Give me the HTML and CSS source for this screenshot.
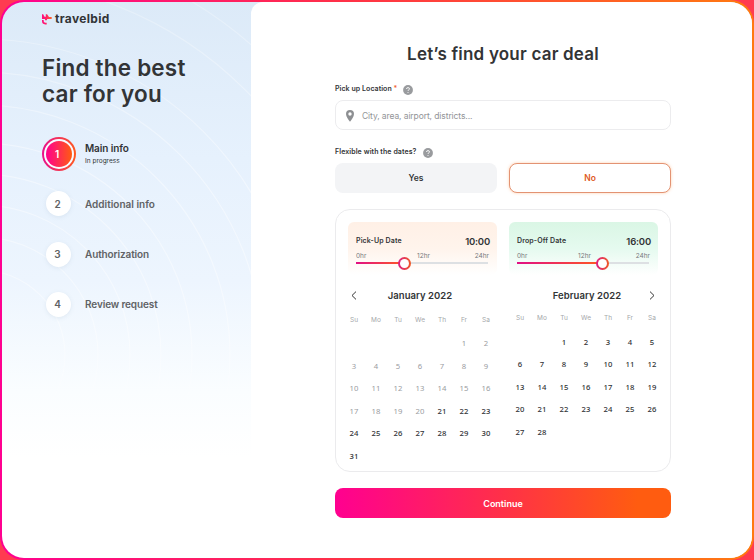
FILE: index.html
```html
<!DOCTYPE html>
<html lang="en">
<head>
<meta charset="utf-8">
<title>travelbid</title>
<link rel="stylesheet" href="styles.css">
</head>
<body>
<div class="frame">
<div class="app">
  <aside class="sidebar">
    <svg class="arcs" viewBox="2 2 250 558" width="250" height="558" aria-hidden="true">
      <g fill="none" stroke="#fff" stroke-opacity=".4" stroke-width="1.200">
        <circle cx="-20" cy="355" r="412"/><circle cx="-20" cy="355" r="375"/><circle cx="-20" cy="355" r="316"/><circle cx="-20" cy="355" r="283"/><circle cx="-20" cy="355" r="250"/><circle cx="-20" cy="355" r="212"/><circle cx="-20" cy="355" r="181"/><circle cx="-20" cy="355" r="150"/><circle cx="-20" cy="355" r="118"/><circle cx="-20" cy="355" r="85"/>
      </g>
    </svg>
    <div class="brand">
      <svg width="11" height="11" viewBox="0 0 11 11" aria-hidden="true">
        <defs><linearGradient id="lg"><stop offset="0" stop-color="#ff0a80"/><stop offset=".5" stop-color="#ff2860"/><stop offset="1" stop-color="#ff6a20"/></linearGradient></defs>
        <path fill="url(#lg)" d="M0 .3h1.200L2.500 2.800h1.300V.3h1.300l1.900 2.600h1.800Q10 3 10 4q0 .9-1.200 1H5.200L4.800 6.200H2.900L3 5H0ZM0 5.900h1.700v1.300q.1 1.400 1.700 1.500h1.300v1.700H3.300Q0 10.200 0 7Z"/>
      </svg>
      <span class="brand-name">travelbid</span>
    </div>
    <h1><span class="h1a">Find the best</span><br><span class="h1b">car for you</span></h1>
    <ol class="steps">
      <li class="step active"><span class="ring"><span class="num">1</span></span><span class="step-text"><b>Main info</b><small>In progress</small></span></li>
      <li class="step"><span class="num">2</span><b class="s2">Additional info</b></li>
      <li class="step"><span class="num">3</span><b class="s3">Authorization</b></li>
      <li class="step"><span class="num">4</span><b class="s4">Review request</b></li>
    </ol>
  </aside>
  <main>
    <h2>Let’s find your car deal</h2>
    <div class="label first"><span class="l1">Pick up Location <i>*</i></span><svg class="help" viewBox="0 0 10 10"><circle cx="5" cy="5" r="4.900" fill="#999b9e"/><path d="M3.500 4Q3.500 2.600 5 2.600T6.500 3.900Q6.500 4.500 5.600 5 5 5.300 5 6M5 7v.9" fill="none" stroke="#fff" stroke-width=".9"/></svg></div>
    <div class="input"><svg width="8" height="12" viewBox="0 0 8 12"><path fill="#8d8f92" fill-rule="evenodd" d="M4 0a4 4 0 0 1 4 4c0 2.800-2.300 5.200-4 7.800C2.300 9.200 0 6.800 0 4a4 4 0 0 1 4-4Zm0 2.300a1.700 1.700 0 1 0 0 3.400 1.700 1.700 0 0 0 0-3.400Z"/></svg><span>City, area, airport, districts...</span></div>
    <div class="label second"><span class="l2">Flexible with the dates?</span><svg class="help" viewBox="0 0 10 10"><circle cx="5" cy="5" r="4.900" fill="#999b9e"/><path d="M3.500 4Q3.500 2.600 5 2.600T6.500 3.900Q6.500 4.500 5.600 5 5 5.300 5 6M5 7v.9" fill="none" stroke="#fff" stroke-width=".9"/></svg></div>
    <div class="choices"><button class="yes">Yes</button><button class="no">No</button></div>
    <section class="calendar">
      <div class="month">
        <div class="panel pickup">
          <div class="panel-head"><b>Pick-Up Date</b><strong>10:00</strong></div>
          <div class="scale"><span>0hr</span><span>12hr</span><span>24hr</span></div>
          <div class="track"><div class="fill"></div><div class="knob"></div></div>
        </div>
        <div class="title"><svg class="prev" width="6" height="9" viewBox="0 0 6 9"><path d="M5 .6 1 4.500l4 3.900" fill="none" stroke="#333" stroke-width="1"/></svg><span class="m1">January 2022</span></div>
        <div class="grid days"><span>Su</span><span>Mo</span><span>Tu</span><span>We</span><span>Th</span><span>Fr</span><span>Sa</span></div>
        <div class="grid dates past"><span class="c6">1</span><span>2</span><span>3</span><span>4</span><span>5</span><span>6</span><span>7</span><span>8</span><span>9</span><span>10</span><span>11</span><span>12</span><span>13</span><span>14</span><span>15</span><span>16</span><span>17</span><span>18</span><span>19</span><span>20</span><em>21</em><em>22</em><em>23</em><em>24</em><em>25</em><em>26</em><em>27</em><em>28</em><em>29</em><em>30</em><em>31</em></div>
      </div>
      <div class="month right">
        <div class="panel dropoff">
          <div class="panel-head"><b>Drop-Off Date</b><strong>16:00</strong></div>
          <div class="scale"><span>0hr</span><span>12hr</span><span>24hr</span></div>
          <div class="track"><div class="fill"></div><div class="knob"></div></div>
        </div>
        <div class="title"><span class="m2">February 2022</span><svg class="next" width="6" height="9" viewBox="0 0 6 9"><path d="m1 .6 4 3.900-4 3.900" fill="none" stroke="#333" stroke-width="1"/></svg></div>
        <div class="grid days"><span>Su</span><span>Mo</span><span>Tu</span><span>We</span><span>Th</span><span>Fr</span><span>Sa</span></div>
        <div class="grid dates"><em class="c3">1</em><em>2</em><em>3</em><em>4</em><em>5</em><em>6</em><em>7</em><em>8</em><em>9</em><em>10</em><em>11</em><em>12</em><em>13</em><em>14</em><em>15</em><em>16</em><em>17</em><em>18</em><em>19</em><em>20</em><em>21</em><em>22</em><em>23</em><em>24</em><em>25</em><em>26</em><em>27</em><em>28</em></div>
      </div>
    </section>
    <button class="continue">Continue</button>
  </main>
</div>
</div>
</body>
</html>
```
FILE: styles.css
```css
* { box-sizing: border-box; }
body { margin: 0; width: 754px; height: 560px; overflow: hidden; background: #ff3b50; color: #323436; font-family: Inter, "Liberation Sans", sans-serif; }
h1, h2, ol { margin: 0; padding: 0; }
button { font: inherit; border: 0; padding: 0; }
svg { flex: none; }
.frame { width: 754px; height: 560px; padding: 2px; border-radius: 24px; background: linear-gradient(90deg, #ff0090, #ff3048 45%, #ff7a10); }
.app { display: flex; height: 556px; border-radius: 22px; overflow: hidden; background: linear-gradient(#dceaf8, #e6f1fd 28%, #edf5fe 50%, #fafdff 70%, #fff 82%); }
.sidebar { position: relative; width: 249px; padding: 10px 0 0 40px; }
.arcs { position: absolute; left: 0; top: 0; -webkit-mask-image: linear-gradient(#0009, #000 30%, #000 60%, transparent 80%); mask-image: linear-gradient(#0009, #000 30%, #000 60%, transparent 80%); }
.brand, h1, .steps { position: relative; }
.brand { display: flex; align-items: center; height: 14px; gap: 2px; }
.brand-name { font-size: 12px; font-weight: 700; letter-spacing: .35px; line-height: 14px; }
h1 { margin-top: 28.500px; font-size: 22.500px; line-height: 26px; font-weight: 600; white-space: nowrap; letter-spacing: .2px; }
.steps { list-style: none; margin-top: 30px; }
.step { display: flex; align-items: center; height: 34px; margin-bottom: 16.300px; font-size: 10px; color: #606265; padding-left: 4px; }
.step b { font-weight: 600; margin-left: 14px; }
.step .s3, .step .s4 { letter-spacing: -.12px; }
.num { width: 25px; height: 25px; border-radius: 50%; background: #fff; display: flex; align-items: center; justify-content: center; font-size: 10px; font-weight: 600; padding-right: 2px; box-shadow: 0 1px 4px #7891aa26; }
.active { padding: 0; color: #323436; }
.ring { width: 34px; height: 34px; border-radius: 50%; border: 2px solid transparent; background: linear-gradient(#f8fbff, #f8fbff) padding-box, linear-gradient(90deg, #e8108c, #ff5a20) border-box; display: grid; place-items: center; }
.ring .num { width: 26px; height: 26px; background: linear-gradient(90deg, #ff0090, #ff5c10); color: #fff; box-shadow: none; padding-right: 4px; }
.step-text { display: flex; flex-direction: column; margin-left: 9px; padding-top: 1px; }
.step-text b { margin: 0; line-height: 14px; letter-spacing: -.1px; }
.step-text small { font-size: 6.500px; line-height: 12px; }
main { width: 501px; background: #fff; border-radius: 12px 0 0 0; padding: 0 81px 0 84px; }
h2 { padding-top: 39px; height: 79px; line-height: 26px; font-size: 17px; font-weight: 600; letter-spacing: .2px; text-align: center; white-space: nowrap; }
.label { display: flex; gap: 6px; height: 11px; font-size: 7px; font-weight: 600; line-height: 13px; align-items: center; white-space: nowrap; letter-spacing: .06px; }
.label span { margin-top: -3px; }
.l2 { letter-spacing: .09px; }
.label i { color: #f0642d; font-style: normal; }
.help { width: 10px; height: 10px; }
.first { margin-top: 3px; }
.input { margin-top: 5px; height: 30px; border: 1px solid #ececee; border-radius: 8px; display: flex; align-items: center; padding-left: 10px; gap: 8px; font-size: 8.500px; letter-spacing: -.1px; color: #929497; padding-top: 1px; }
.second { margin-top: 17px; }
.choices { display: flex; gap: 12px; margin-top: 5px; }
.choices button { width: 162px; height: 30px; border-radius: 8px; font-size: 8.500px; font-weight: 600; color: #323436; }
.choices .yes { background: #f3f4f6; }
.choices .no { background: #fff; border: 1px solid #e39373; color: #de5b25; box-shadow: 0 0 3px #ff9d5780; }
.calendar { margin-top: 16px; height: 263px; border: 1px solid #ebebed; border-radius: 15px; display: flex; gap: 12px; padding: 12px 0 0 7px; }
.month { width: 154px; }
.panel { width: 149px; height: 53px; border-radius: 6px; padding: 11px 8px 0; margin-left: 5px; background: linear-gradient(#fff0e6, #fff4ec 50%, #fff); }
.dropoff { margin-left: 0; background: linear-gradient(#daf6e5, #e5faef 50%, #fff); }
.panel-head { display: flex; justify-content: space-between; align-items: center; height: 15px; font-size: 7px; white-space: nowrap; }
.panel-head b { font-weight: 600; letter-spacing: .13px; }
.panel-head strong { font-size: 9.500px; font-weight: 600; letter-spacing: -.2px; margin-right: -1px; padding-top: 1px; }
.scale { display: flex; justify-content: space-between; font-size: 6.500px; line-height: 8px; margin-top: 4px; color: #77797c; }
.scale span:nth-child(2) { padding-left: 6px; }
.track { position: relative; height: 2px; width: 132px; margin-top: 2px; background: #dde0e3; }
.fill { width: 48px; height: 2px; background: linear-gradient(90deg, #e01085, #ff5a20); }
.knob { position: absolute; top: -5.500px; left: 42px; width: 13px; height: 13px; border-radius: 50%; border: 2px solid transparent; background: linear-gradient(#fff, #fff) padding-box, linear-gradient(90deg, #dc1c85, #ef5a24) border-box; }
.dropoff .fill { width: 85px; }
.dropoff .knob { left: 79px; }
.title { position: relative; height: 16px; margin-top: 13px; font-size: 9.500px; line-height: 16px; font-weight: 600; letter-spacing: .05px; text-align: center; white-space: nowrap; }
.m2 { padding-left: 2px; }
.title svg { position: absolute; top: 3px; }
.prev { left: 8px; }
.next { right: 8px; }
.grid { display: grid; grid-template-columns: repeat(7, 22px); text-align: center; }
.days { height: 12px; margin-top: 10px; font-size: 6.500px; line-height: 12px; color: #a5a7aa; }
.dates { grid-auto-rows: 22.500px; margin-top: 6.900px; font: 500 7.700px/22.500px "Noto Sans", sans-serif; letter-spacing: .2px; color: #303234; }
.dates em { font-style: normal; }
.past { margin-top: 6px; color: #9a9c9f; font-weight: 400; }
.past em { color: #303234; font-weight: 500; }
.right .days { margin-top: 8px; }
.c6 { grid-column: 6; }
.c3 { grid-column: 3; }
.continue { display: block; width: 336px; height: 30px; margin-top: 16px; border-radius: 8px; background: linear-gradient(90deg, #ff0090, #ff3048 50%, #ff5c10 90%); color: #fff; font-size: 9px; font-weight: 600; }
```
